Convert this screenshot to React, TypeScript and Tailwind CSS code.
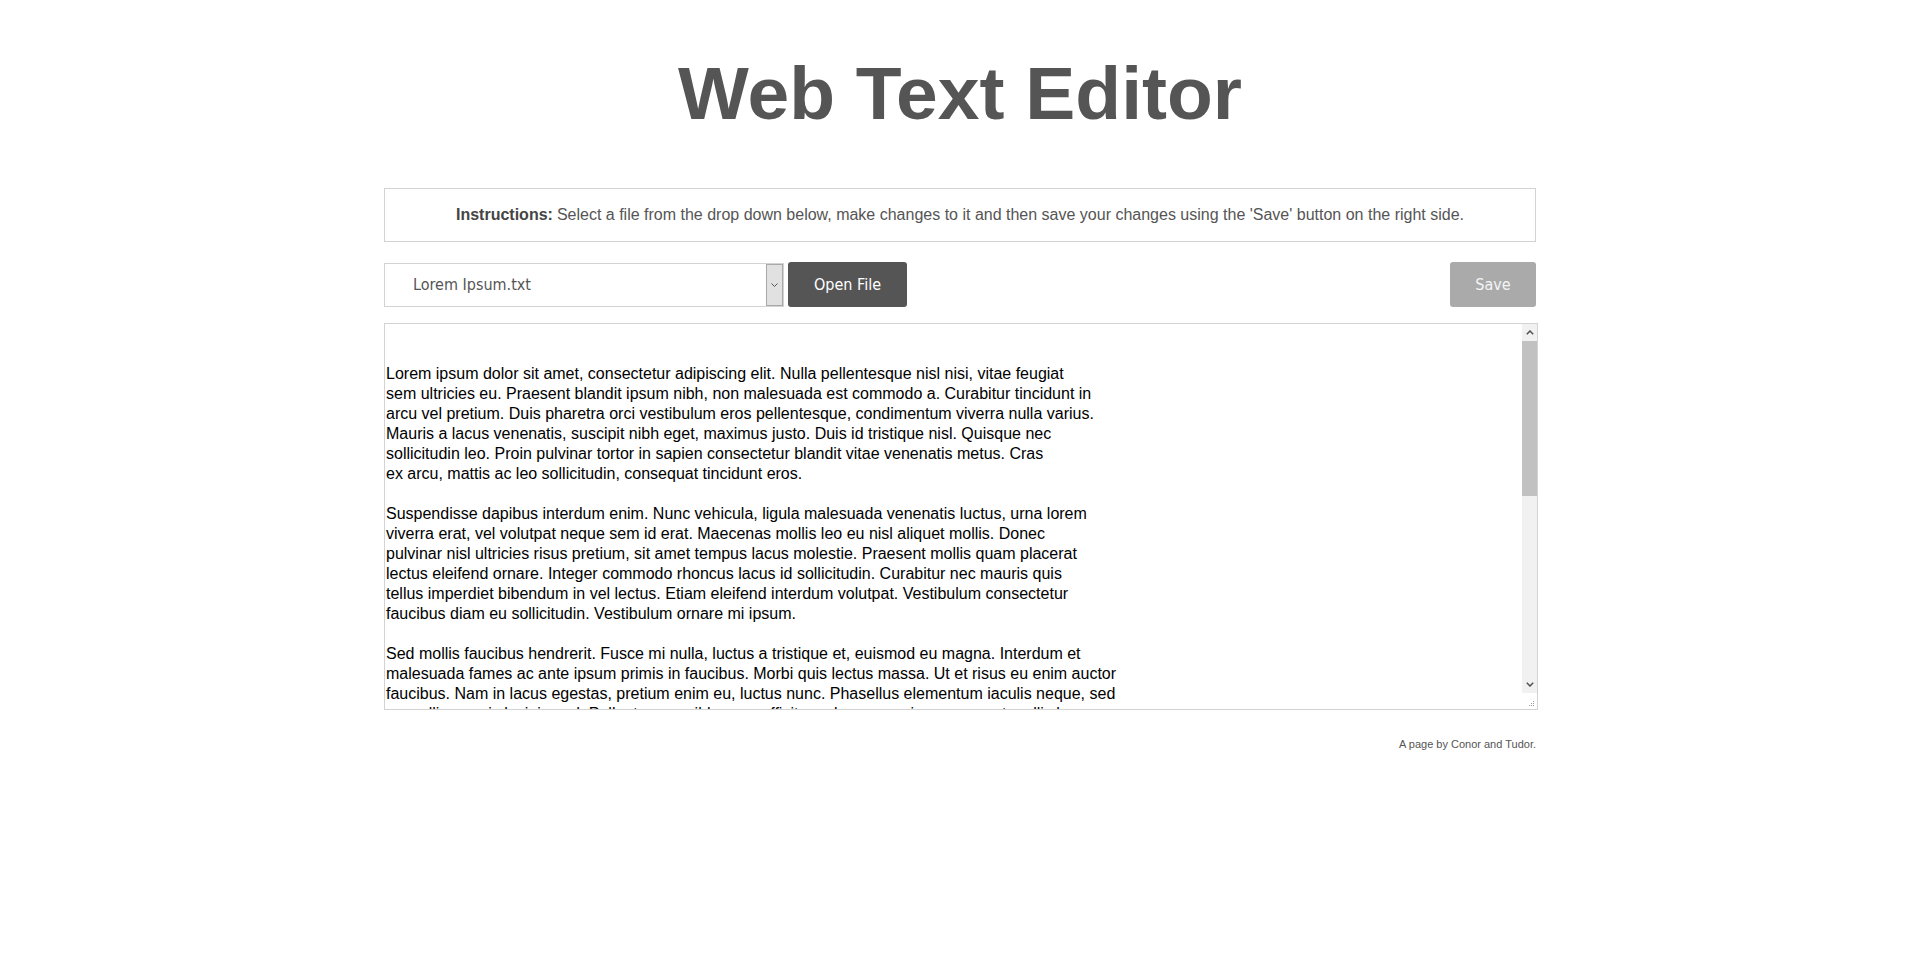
import { useState } from "react";

const FILES = ["Lorem Ipsum.txt", "Notes.txt", "Readme.txt"];

const LOREM = `

Lorem ipsum dolor sit amet, consectetur adipiscing elit. Nulla pellentesque nisl nisi, vitae feugiat
sem ultricies eu. Praesent blandit ipsum nibh, non malesuada est commodo a. Curabitur tincidunt in
arcu vel pretium. Duis pharetra orci vestibulum eros pellentesque, condimentum viverra nulla varius.
Mauris a lacus venenatis, suscipit nibh eget, maximus justo. Duis id tristique nisl. Quisque nec
sollicitudin leo. Proin pulvinar tortor in sapien consectetur blandit vitae venenatis metus. Cras
ex arcu, mattis ac leo sollicitudin, consequat tincidunt eros.

Suspendisse dapibus interdum enim. Nunc vehicula, ligula malesuada venenatis luctus, urna lorem
viverra erat, vel volutpat neque sem id erat. Maecenas mollis leo eu nisl aliquet mollis. Donec
pulvinar nisl ultricies risus pretium, sit amet tempus lacus molestie. Praesent mollis quam placerat
lectus eleifend ornare. Integer commodo rhoncus lacus id sollicitudin. Curabitur nec mauris quis
tellus imperdiet bibendum in vel lectus. Etiam eleifend interdum volutpat. Vestibulum consectetur
faucibus diam eu sollicitudin. Vestibulum ornare mi ipsum.

Sed mollis faucibus hendrerit. Fusce mi nulla, luctus a tristique et, euismod eu magna. Interdum et
malesuada fames ac ante ipsum primis in faucibus. Morbi quis lectus massa. Ut et risus eu enim auctor
faucibus. Nam in lacus egestas, pretium enim eu, luctus nunc. Phasellus elementum iaculis neque, sed
convallis mauris lacinia sed. Pellentesque nibh urna, efficitur vel ornare quis, posuere at mollis leo.
Quisque vulputate varius justo, in maximus est finibus ac. Aenean at ultricies nisi, nec laoreet
diam. Sed ac dolor at arcu aliquam tincidunt.

Aliquam erat volutpat. Phasellus vitae nibh sed arcu accumsan suscipit. Donec at ex sit amet nisl
ullamcorper feugiat non vel nulla. Vivamus vel tellus ac purus aliquam fringilla. Nam ac lorem quis
lectus volutpat porta. Fusce porttitor massa at ligula eleifend, sit amet hendrerit nunc rhoncus.
Integer in ante dictum, sagittis orci ac, egestas diam. Cras vitae tortor nec lorem dapibus dictum.
Nunc sit amet turpis vel mi sodales gravida. Vivamus iaculis, lorem at convallis fermentum, neque
nibh mattis odio, id sodales lacus arcu quis ipsum.

Nullam ultricies ante eget dui euismod, ut lacinia mi aliquet. Morbi eget purus id eros varius
tempor. Curabitur vel turpis ac orci tincidunt bibendum. Mauris vel odio a massa pulvinar luctus.
Proin accumsan velit sed lectus molestie, non posuere libero placerat. Sed id pretium nisl, nec
tincidunt sapien. Etiam quis sem nec metus fermentum commodo. Donec rutrum justo vitae erat
pellentesque, sed luctus sapien tempus. Mauris feugiat elit in lectus elementum, vel pharetra
ligula vulputate. Nulla facilisi.

Vestibulum ante ipsum primis in faucibus orci luctus et ultrices posuere cubilia curae; Sed id
tortor sit amet nunc pretium vehicula. Aenean vel lacus sit amet velit rutrum tincidunt. In hac
habitasse platea dictumst. Pellentesque habitant morbi tristique senectus et netus et malesuada
fames ac turpis egestas. Quisque sed quam in libero elementum condimentum. Ut ac erat sed ligula
bibendum pretium. Morbi non lacus vitae diam blandit aliquet. Integer dictum nisi at feugiat
placerat. Fusce et augue id metus dapibus dignissim.

`;

// classic scrollbar drawn next to the textarea (headless hides native ones)
const ScrollBar = () => (
  <div className="w-[15px] flex flex-col">
    <div className="h-[17px] bg-[#f1f1f1] flex items-center justify-center">
      <svg width="8" height="5" viewBox="0 0 8 5">
        <polyline points="0.8,4.2 4,1 7.2,4.2" fill="none" stroke="#505050" strokeWidth="1.5" />
      </svg>
    </div>
    <div className="h-[155px] bg-[#c1c1c1]" />
    <div className="flex-1 bg-[#f1f1f1]" />
    <div className="h-[17px] bg-[#f1f1f1] flex items-center justify-center">
      <svg width="8" height="5" viewBox="0 0 8 5">
        <polyline points="0.8,0.8 4,4 7.2,0.8" fill="none" stroke="#505050" strokeWidth="1.5" />
      </svg>
    </div>
    <div className="h-[16px] bg-white flex items-end justify-end pr-[2px] pb-[2px]">
      <svg width="7" height="7" viewBox="0 0 7 7" fill="#9a9a9a">
        <rect x="5" y="1" width="1" height="1" />
        <rect x="3" y="3" width="1" height="1" />
        <rect x="5" y="3" width="1" height="1" />
        <rect x="1" y="5" width="1" height="1" />
        <rect x="3" y="5" width="1" height="1" />
        <rect x="5" y="5" width="1" height="1" />
      </svg>
    </div>
  </div>
);

const App = () => {
  const [file, setFile] = useState(FILES[0]);
  const [text, setText] = useState(LOREM);

  return (
    <div className="min-h-screen bg-white font-['Liberation_Sans',Arial,sans-serif]">
      <div className="w-[1152px] mx-auto">
        <h1 className="pt-[56px] text-center text-[75px] leading-none font-bold text-[#555555]">
          Web Text Editor
        </h1>

        <div className="mt-[57px] h-[54px] border border-[#d3d3d3] flex items-center justify-center text-[16px] text-[#555555]">
          <b className="text-[#444444] mr-[4px]">Instructions:</b>
          Select a file from the drop down below, make changes to it and then save your changes using the
          'Save' button on the right side.
        </div>

        <div className="mt-5 flex items-center h-[45px]">
          <div className="flex h-[44px] w-[400px] border border-[#d3d3d3] bg-white">
            <select
              value={file}
              onChange={(e) => setFile(e.target.value)}
              className="flex-1 appearance-none bg-transparent pl-[28px] text-[16px] text-[#555555] outline-none font-['DejaVu_Sans_Condensed','Liberation_Sans_Narrow',sans-serif]"
            >
              {FILES.map((f) => (
                <option key={f}>{f}</option>
              ))}
            </select>
            <div className="w-[17px] border border-[#a9a9a9] bg-[#e1e1e1] flex items-center justify-center">
              <svg width="7" height="4" viewBox="0 0 7 4">
                <polyline points="0.5,0.5 3.5,3.5 6.5,0.5" fill="none" stroke="#555" strokeWidth="1" />
              </svg>
            </div>
          </div>
          <button className="ml-[4px] h-[45px] w-[119px] rounded-[3px] bg-[#555555] text-white text-[16px] font-['DejaVu_Sans_Condensed','Liberation_Sans_Narrow',sans-serif]">
            Open File
          </button>
          <button className="ml-auto h-[45px] w-[86px] rounded-[3px] bg-[#aaaaaa] text-[#f5f5f5] text-[16px] font-['DejaVu_Sans_Condensed','Liberation_Sans_Narrow',sans-serif]">
            Save
          </button>
        </div>

        <div className="mt-4 flex w-[1154px] h-[387px] border border-[#d3d3d3] bg-white">
          <textarea
            value={text}
            onChange={(e) => setText(e.target.value)}
            spellCheck={false}
            wrap="off"
            className="flex-1 h-full resize-none overflow-hidden pl-[1px] pt-0 text-[16px] leading-5 text-black outline-none font-['Liberation_Sans',Arial,sans-serif]"
          />
          <ScrollBar />
        </div>

        <p className="mt-[26px] text-right text-[11px] text-[#555555]">A page by Conor and Tudor.</p>
      </div>
    </div>
  );
};

export default App;
